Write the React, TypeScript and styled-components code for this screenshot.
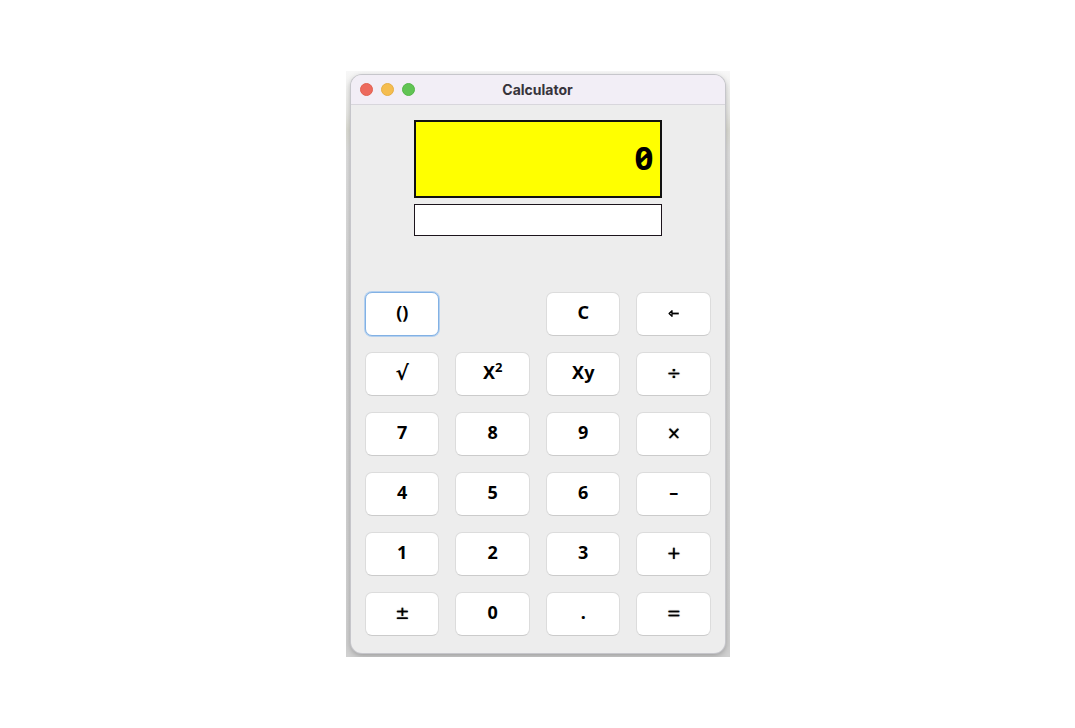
import React from "react";
import styled, { createGlobalStyle, css } from "styled-components";

const GlobalStyle = createGlobalStyle`
  *, *::before, *::after { box-sizing: border-box; }
  body { margin: 0; background: #fff; }
`;

const Page = styled.main`
  min-height: 100vh;
  display: flex;
  align-items: center;
  justify-content: center;
`;

const Backdrop = styled.div`
  width: 100%;
  max-width: 384px;
  padding: 4px 5px;
  overflow: hidden;
  background: linear-gradient(#f7f7f7 0%, #e9e9e6 7%, #dcdcd4 10%, #dedede 14%, #d2d2d2 45%, #d0d0d0 100%);
`;

const Window = styled.section`
  border-radius: 11px;
  background: #ededed;
  overflow: hidden;
  box-shadow: 0 0 0 1px #c6c6cb, 0 2px 6px rgba(0, 0, 0, 0.3);
`;

const TitleBar = styled.header`
  display: grid;
  grid-template-columns: 1fr auto 1fr;
  align-items: center;
  height: 30px;
  padding: 0 9px;
  background: #f2eef6;
  border-bottom: 1px solid #d8d6dc;
`;

const Lights = styled.div`
  display: flex;
  gap: 8px;
`;

const Light = styled.button<{ $color: string; $edge: string }>`
  width: 13px;
  height: 13px;
  padding: 0;
  border: 1px solid ${(p) => p.$edge};
  border-radius: 50%;
  background: ${(p) => p.$color};
`;

const Title = styled.h1`
  margin: 0;
  font: 700 14px/20px Inter, sans-serif;
  color: #37343b;
`;

const Screens = styled.div`
  display: flex;
  flex-direction: column;
  gap: 6px;
  padding: 15px 63px 0;
`;

const screen = css`
  width: 100%;
  border-radius: 0;
  outline: none;
  color: #000;
  text-align: right;
`;

const Display = styled.input`
  ${screen}
  height: 78px;
  padding: 0 6px 4px;
  border: 2px solid #111;
  background: #ffff00;
  font: 700 33px/40px "Noto Sans", sans-serif;
  font-feature-settings: "zero" 1;
`;

const History = styled.input`
  ${screen}
  height: 32px;
  padding: 0 6px;
  border: 1px solid #1c141c;
  background: #fff;
  font: 400 14px/20px "Noto Sans", sans-serif;
`;

const Keypad = styled.div`
  display: grid;
  grid-template-columns: repeat(4, 1fr);
  gap: 16px;
  padding: 56px 14px 17px;
`;

const faces = {
  text: '700 18px/24px "Noto Sans", sans-serif',
  sign: '400 17px/24px "DejaVu Sans", sans-serif',
  root: '700 20px/24px "DejaVu Sans", sans-serif',
};

const Key = styled.button<{ $active?: boolean; $face: keyof typeof faces }>`
  display: flex;
  align-items: center;
  justify-content: center;
  height: 44px;
  padding: 0 0 ${(p) => (p.$face === "text" ? 4 : 2)}px 1px;
  border: 1px solid ${(p) => (p.$active ? "#82b1e4" : "#dcdcdc")};
  border-bottom-color: ${(p) => (p.$active ? "#82b1e4" : "#cbcbcb")};
  border-radius: 7px;
  background: #fff;
  box-shadow: ${(p) => (p.$active ? "0 0 0 1px #b4d0ef" : "none")};
  color: #000;
  font: ${(p) => faces[p.$face]};
  text-shadow: ${(p) => (p.$face === "sign" ? "0 0 1px #000" : "none")};
`;

const Power = styled.sup`
  align-self: flex-start;
  font-size: 13px;
  line-height: 16px;
  padding-top: 6px;
`;

const Blank = styled.span``;

const BackArrow = () => (
  <svg width="11" height="9" viewBox="0 0 11 9" fill="none" stroke="#000" aria-hidden="true">
    <path d="M4 1.7 1.1 4.5 4 7.3Z" strokeWidth="1.3" strokeLinejoin="round" />
    <path d="M4 4.5h6.8" strokeWidth="1.8" />
  </svg>
);

type KeySpec = {
  label: string;
  content?: React.ReactNode;
  face?: keyof typeof faces;
  active?: boolean;
} | null;

const keys: KeySpec[] = [
  { label: "()", active: true },
  null,
  { label: "C" },
  { label: "Backspace", content: <BackArrow />, face: "root" },
  { label: "√", face: "root" },
  { label: "X squared", content: <>X<Power>2</Power></> },
  { label: "Xy" },
  { label: "÷", face: "sign" },
  { label: "7" },
  { label: "8" },
  { label: "9" },
  { label: "×", face: "sign" },
  { label: "4" },
  { label: "5" },
  { label: "6" },
  { label: "–" },
  { label: "1" },
  { label: "2" },
  { label: "3" },
  { label: "+", face: "sign" },
  { label: "±", face: "sign" },
  { label: "0" },
  { label: "." },
  { label: "=", face: "sign" },
];

export default function App() {
  return (
    <>
      <GlobalStyle />
      <Page>
        <Backdrop>
          <Window>
            <TitleBar>
              <Lights>
                <Light $color="#ed6a5e" $edge="#e0604f" aria-label="Close" />
                <Light $color="#f5bd4f" $edge="#e5ae45" aria-label="Minimize" />
                <Light $color="#61c454" $edge="#54b548" aria-label="Zoom" />
              </Lights>
              <Title>Calculator</Title>
            </TitleBar>
            <Screens>
              <Display aria-label="Result" value="0" readOnly />
              <History aria-label="Expression" value="" readOnly />
            </Screens>
            <Keypad>
              {keys.map((key, i) =>
                key ? (
                  <Key key={i} $active={key.active} $face={key.face ?? "text"} aria-label={key.label}>
                    {key.content ?? key.label}
                  </Key>
                ) : (
                  <Blank key={i} />
                ),
              )}
            </Keypad>
          </Window>
        </Backdrop>
      </Page>
    </>
  );
}
